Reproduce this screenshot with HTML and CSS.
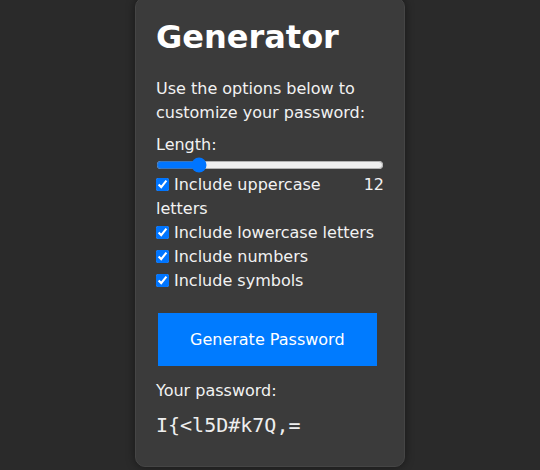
FILE: index.html
```html
<!DOCTYPE html>
<html lang="en">
<head>
<meta charset="utf-8">
<title>Password Generator</title>
<link rel="stylesheet" href="styles.css">
</head>
<body>
  <div class="card">
    <h1 class="title">Generator</h1>
    <p class="intro">Use the options below to customize your password:</p>
    <label class="length-label" for="length">Length:</label>
    <input class="slider" type="range" id="length" min="8" max="32" value="12">
    <span class="length-value">12</span>
    <div class="option"><input type="checkbox" checked>Include uppercase letters</div>
    <div class="option"><input type="checkbox" checked>Include lowercase letters</div>
    <div class="option"><input type="checkbox" checked>Include numbers</div>
    <div class="option"><input type="checkbox" checked>Include symbols</div>
    <button class="generate">Generate Password</button>
    <div class="result-label">Your password:</div>
    <div class="password">I{&lt;l5D#k7Q,=</div>
  </div>
</body>
</html>
```
FILE: styles.css
```css
html, body {
  margin: 0;
  height: 100%;
}
body {
  background: #2a2a2a;
  font-family: "DejaVu Sans", sans-serif;
  font-size: 16px;
  line-height: 24px;
  color: #f2f2f2;
  display: flex;
  justify-content: center;
  align-items: flex-end;
  padding-bottom: 3px;
  box-sizing: border-box;
  overflow: hidden;
}
.card {
  width: 228px;
  flex-shrink: 0;
  background: #3b3b3b;
  border: 1px solid #454545;
  border-radius: 10px;
  padding: 21px 20px 27px 20px;
  box-shadow: 0 0 10px rgba(0, 0, 0, 0.45);
}
.title {
  font-size: 32px;
  line-height: 37px;
  font-weight: bold;
  color: #ffffff;
  margin: 0 0 21px 0;
}
.intro {
  margin: 0 0 8px 0;
}
.length-label {
  display: block;
}
.slider {
  display: block;
  width: 100%;
  height: 16px;
  margin: 0;
}
.length-value {
  float: right;
}
.option input {
  width: 13px;
  height: 13px;
  margin: 0 5px 0 0;
  vertical-align: middle;
  position: relative;
  top: -1px;
}
.generate {
  display: block;
  margin: 20px 0 0 2px;
  padding: 17px 32px;
  border: none;
  background: #007bff;
  color: #ffffff;
  font-family: "DejaVu Sans", sans-serif;
  font-size: 16px;
  line-height: 19px;
}
.result-label {
  margin-top: 13px;
}
.password {
  margin-top: 8px;
  font-family: "DejaVu Sans Mono", monospace;
  font-size: 20px;
  line-height: 28px;
  color: #eeeeee;
}
```
